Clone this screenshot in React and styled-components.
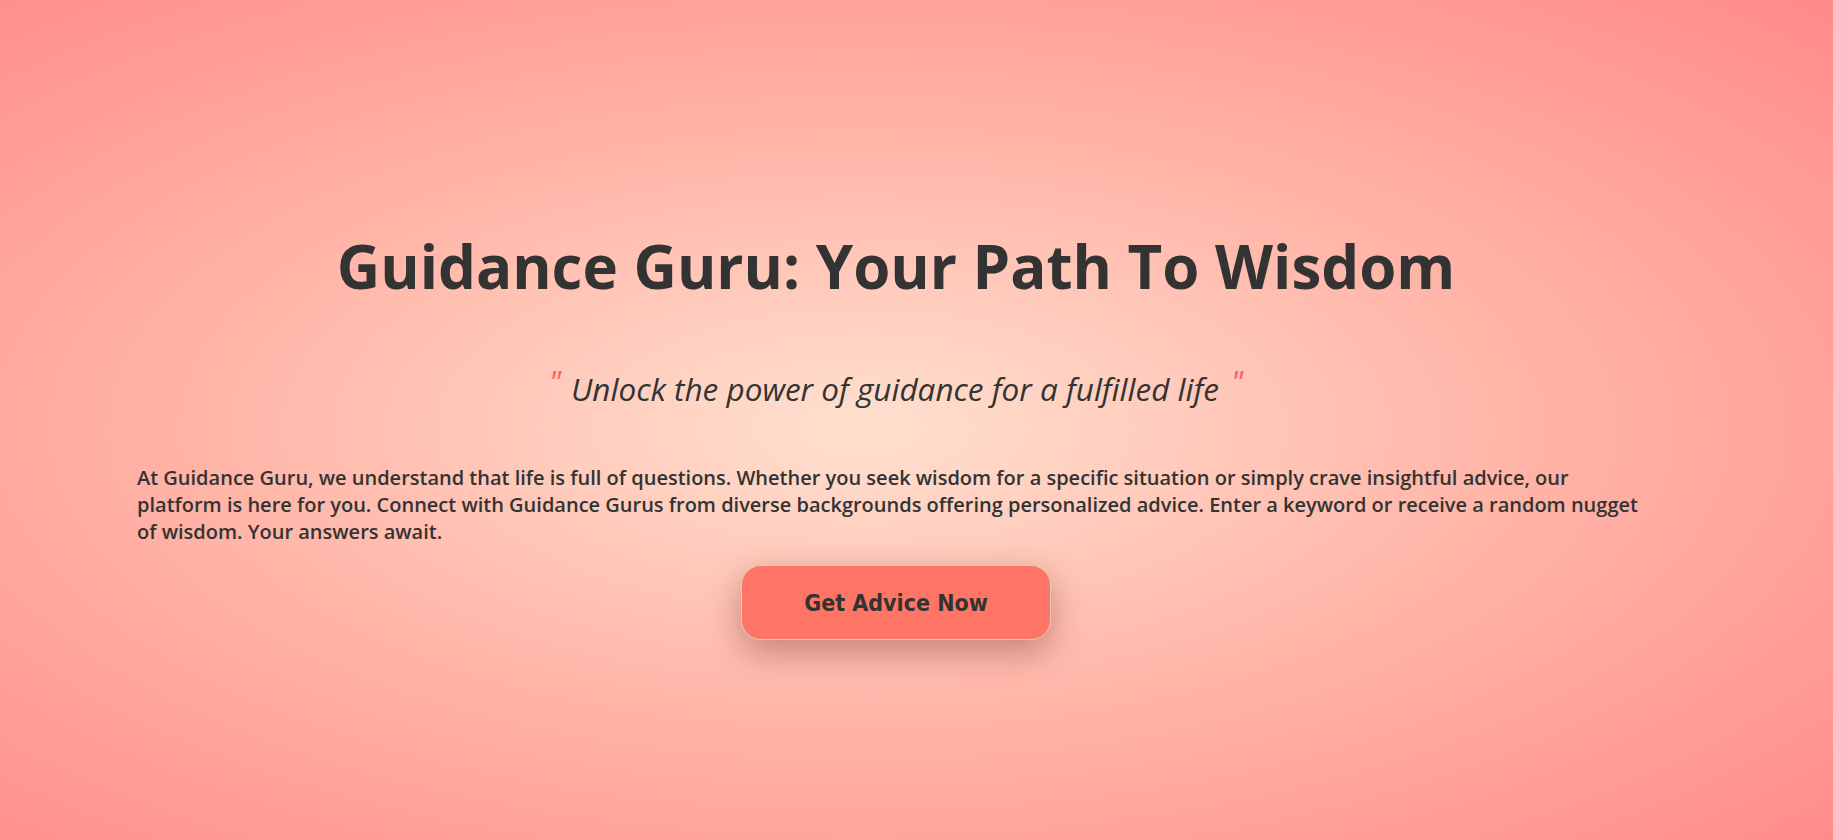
import React from "react";
import styled, { createGlobalStyle } from "styled-components";

const GlobalStyle = createGlobalStyle`
  html, body {
    margin: 0;
    padding: 0;
  }
  body {
    font-family: "Open Sans", "Liberation Sans", sans-serif;
    color: #333;
  }
`;

const Page = styled.div`
  box-sizing: border-box;
  min-height: 100vh;
  background: radial-gradient(ellipse at 47% 51%, #ffe0cf 0%, #ffb3a6 50%, #ff8a8a 100%);
  display: flex;
  flex-direction: column;
  align-items: center;
  padding: 230px 178px 0 137px;
`;

const Title = styled.h1`
  margin: 0;
  font-size: 60px;
  font-weight: 700;
  line-height: 72px;
  text-align: center;
`;

const Tagline = styled.p`
  margin: 55px 0 0;
  font-size: 31.5px;
  font-style: italic;
  font-weight: 400;
  line-height: 48px;
  text-align: center;
`;

const Mark = styled.span`
  color: #ff5f5f;
  vertical-align: 8px;
  margin: ${(p) => (p.$end ? "0 0 0 12px" : "0 10px 0 0")};
`;

const Description = styled.p`
  margin: 51px 0 0;
  font-size: 20px;
  font-weight: 600;
  line-height: 27px;
  text-align: left;
`;

const AdviceButton = styled.button`
  margin-top: 20px;
  width: 310px;
  height: 75px;
  background: #ff7565;
  color: #333;
  border: 1px solid #e9c6bd;
  border-radius: 20px;
  font-family: "DejaVu Sans Condensed", "DejaVu Sans", Verdana, sans-serif;
  font-size: 23px;
  font-weight: 700;
  box-shadow: 0 12px 34px rgba(110, 40, 30, 0.4);
  cursor: pointer;
`;

export default function App() {
  return (
    <>
      <GlobalStyle />
      <Page>
        <Title>Guidance Guru: Your Path To Wisdom</Title>
        <Tagline>
          <Mark>"</Mark>Unlock the power of guidance for a fulfilled life
          <Mark $end>"</Mark>
        </Tagline>
        <Description>
          At Guidance Guru, we understand that life is full of questions. Whether you seek
          wisdom for a specific situation or simply crave insightful advice, our platform is
          here for you. Connect with Guidance Gurus from diverse backgrounds offering
          personalized advice. Enter a keyword or receive a random nugget of wisdom. Your
          answers await.
        </Description>
        <AdviceButton>Get Advice Now</AdviceButton>
      </Page>
    </>
  );
}
